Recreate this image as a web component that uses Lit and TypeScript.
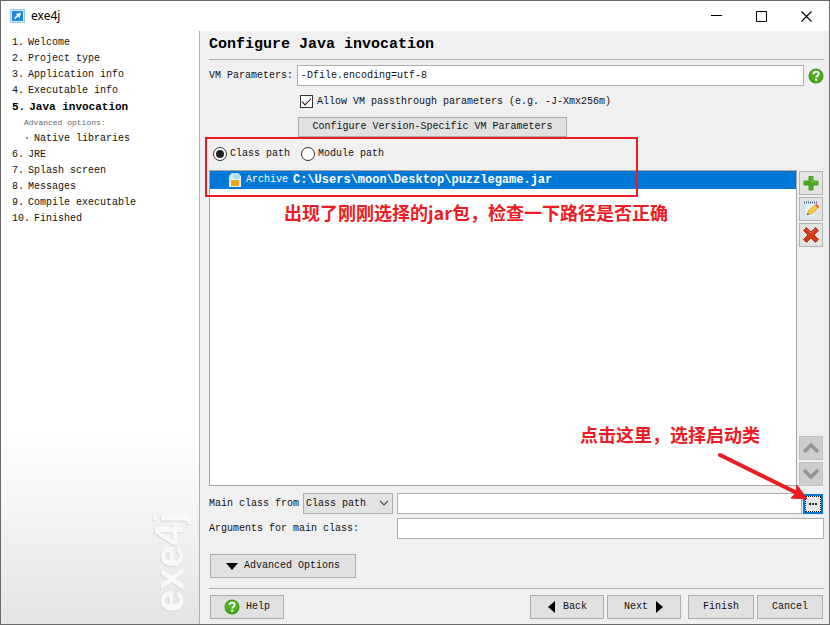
import { LitElement, html, svg, css, nothing } from "lit";
import { customElement, property } from "lit/decorators.js";

interface Step {
  num?: string;
  label: string;
  kind?: "current" | "note" | "sub";
}

const STEPS: Step[] = [
  { num: "1.", label: "Welcome" },
  { num: "2.", label: "Project type" },
  { num: "3.", label: "Application info" },
  { num: "4.", label: "Executable info" },
  { num: "5.", label: "Java invocation", kind: "current" },
  { label: "Advanced options:", kind: "note" },
  { num: "·", label: "Native libraries", kind: "sub" },
  { num: "6.", label: "JRE" },
  { num: "7.", label: "Splash screen" },
  { num: "8.", label: "Messages" },
  { num: "9.", label: "Compile executable" },
  { num: "10.", label: "Finished" },
];

const helpIcon = html`<svg class="help-icon" width="16" height="16" viewBox="0 0 16 16" aria-hidden="true">
  <circle cx="8" cy="8" r="7.5" fill="#3f9a14" />
  <circle cx="8" cy="7.6" r="6.3" fill="#52ad22" />
  <path d="M5.5 6.1C5.6 4.5 6.6 3.7 8.1 3.7s2.6.8 2.6 2.2c0 1.9-2.5 1.9-2.5 3.7" fill="none" stroke="#fff" stroke-width="1.8" />
  <rect x="7.2" y="10.7" width="2" height="2" fill="#fff" />
</svg>`;

const TOOL_ICONS = {
  add: svg`<path d="M7 2.500h4v4.500h5v4h-5v5H7v-5H2V7h5z" fill="#4aa81c" stroke="#4a9b26" stroke-width="1" />
    <path d="M8 3.500h2v4.500h5" fill="none" stroke="#76c44b" stroke-width="1" />`,
  edit: svg`<rect x="2.500" y="3" width="11" height="14" fill="#e4f4fd" stroke="#c3dfee" />
    <path d="M2 2.500h13" stroke="#4f6a86" stroke-width="2" stroke-dasharray="1 1" />
    <path d="M5 15l1.500-4.500L13 5l3 3-6.500 6z" fill="#fac83a" stroke="#dda02a" stroke-width=".7" />
    <path d="M13 5l1.500-1.300 3 3L16 8z" fill="#e9642c" />
    <path d="M5 15l.7-2.200L7.300 14.300z" fill="#4d4d4d" />`,
  remove: svg`<path d="M4.500 1.500L9 6l4.500-4.500 3 3L12 9l4.500 4.500-3 3L9 12l-4.500 4.500-3-3L6 9 1.500 4.500z" fill="#cf3a12" stroke="#b03a1c" stroke-width="1" stroke-linejoin="round" />
    <path d="M4.500 3L9 7.500 13.500 3" fill="none" stroke="#e8694a" stroke-width="1" />`,
  up: svg`<path d="M2 13l7-7 7 7" fill="none" stroke="#949494" stroke-width="3.500" />`,
  down: svg`<path d="M2 5l7 7 7-7" fill="none" stroke="#949494" stroke-width="3.500" />`,
};

@customElement("tool-button")
class ToolButton extends LitElement {
  @property() icon: keyof typeof TOOL_ICONS = "add";
  @property() label = "";
  @property({ type: Boolean }) disabled = false;

  static styles = css`
    :host { display: block; }
    .btn {
      display: flex; align-items: center; justify-content: center;
      width: 24px; height: 24px; padding: 0;
      background: #e3e3e3; border: 1px solid #b2b2b2;
    }
    .btn:disabled { background: #cdcdcd; border-color: #c2c2c2; }
  `;

  render() {
    return html`<button class="btn" aria-label=${this.label} ?disabled=${this.disabled}>
      <svg width="18" height="18" viewBox="0 0 18 18" aria-hidden="true">${TOOL_ICONS[this.icon]}</svg>
    </button>`;
  }
}

@customElement("wizard-steps")
class WizardSteps extends LitElement {
  static styles = css`
    :host {
      display: flex; flex-direction: column; justify-content: space-between;
      box-sizing: border-box; padding: 4px 10px 12px 11px;
      background: linear-gradient(#fff 0, #fff 68%, #e4e4e4 100%);
      border-right: 1px solid #b0b0b0;
    }
    .list { list-style: none; margin: 0; padding: 0; }
    .step { display: flex; gap: 4px; height: 16px; line-height: 16px; white-space: pre; }
    .current { font-size: 11px; font-weight: bold; color: #000; }
    .note { padding-left: 12px; font-size: 8px; color: #666; }
    .sub { padding-left: 12px; }
    .brand {
      align-self: flex-end; writing-mode: vertical-rl; transform: rotate(180deg);
      font: bold 40px/40px "Liberation Sans", Arial, sans-serif;
      color: #f9f9f9; text-shadow: -1px -1px 1px #dadada;
    }
  `;

  render() {
    return html`
      <ol class="list">
        ${STEPS.map(
          (s) => html`<li class="step ${s.kind ?? ""}">
            ${s.num ? html`<span>${s.num}</span>` : nothing}<span>${s.label}</span>
          </li>`
        )}
      </ol>
      <div class="brand">exe4j</div>
    `;
  }
}

@customElement("app-root")
class AppRoot extends LitElement {
  static styles = css`
    :host {
      display: flex; flex-direction: column; box-sizing: border-box; min-height: 100vh;
      border: 1px solid #6a6a6a; background: #f0f0f0; color: #111;
      font: 10px/16px "Liberation Mono", "Noto Sans CJK SC", monospace;
    }
    * { box-sizing: border-box; }
    button, input, select { font: inherit; color: inherit; margin: 0; border-radius: 0; }

    .titlebar { display: flex; align-items: center; height: 30px; padding-left: 9px; background: #fff; }
    .title { flex: 1; margin: 0 0 0 6px; font: 12px/16px "Noto Sans", sans-serif; color: #000; }
    .win { width: 45px; height: 30px; padding: 0; border: 0; background: none; display: flex; align-items: center; justify-content: center; }

    .body { flex: 1; display: grid; grid-template-columns: 199px minmax(0, 1fr); }
    .main { display: flex; flex-direction: column; min-width: 0; padding: 4px 5px 5px 9px; }

    .heading { margin: 0; height: 24px; font-size: 15px; line-height: 20px; font-weight: bold; color: #000; }
    .rule { height: 1px; margin: 0; border: 0; background: #adadad; flex: none; }

    .field { height: 21px; min-width: 0; flex: 1; padding: 0 3px; background: #fff; border: 1px solid #adadad; outline: 0; }
    .row { display: flex; align-items: center; }
    .form { display: grid; grid-template-columns: 84px minmax(0, 1fr); column-gap: 4px; margin-top: 5px; }
    .vm { gap: 4px; }
    .help-link { display: flex; width: 16px; height: 16px; padding: 0; border: 0; background: none; }
    .checkline { grid-column: 2; height: 31px; padding-left: 3px; gap: 4px; display: flex; align-items: center; }
    .check {
      appearance: none; width: 13px; height: 13px; background: #fff; border: 1px solid #333;
      display: grid; place-items: center;
    }
    .check:checked::after {
      content: ""; width: 8px; height: 4px; margin-top: -2px;
      border-left: 1px solid #111; border-bottom: 1px solid #111; transform: rotate(-45deg);
    }
    .push {
      display: flex; align-items: center; justify-content: center; gap: 6px; height: 24px;
      padding: 0; background: #e1e1e1; border: 1px solid #adadad; white-space: nowrap;
    }
    .version { grid-column: 2; justify-self: start; width: 269px; height: 20px; margin-left: 1px; }

    .paths { position: relative; flex: 1; display: flex; flex-direction: column; }
    .radios { display: flex; align-items: center; gap: 11px; height: 33px; padding-left: 4px; }
    .option { display: flex; align-items: center; gap: 3px; }
    .radio {
      appearance: none; width: 14px; height: 14px; border: 1px solid #333; border-radius: 50%;
      background: #fff; display: grid; place-items: center;
    }
    .radio:checked::after { content: ""; width: 8px; height: 8px; border-radius: 50%; background: #222; }
    .listrow { flex: 1; display: flex; gap: 2px; }
    .list { flex: 1; min-width: 0; margin: 0; padding: 0; list-style: none; background: #fff; border: 1px solid #a5a5a5; }
    .item {
      display: flex; align-items: center; height: 18px; padding-left: 18px;
      background: #0078d7; color: #fff; white-space: nowrap;
    }
    .kind { margin: 0 5px 0 4px; }
    .path { font-size: 12px; font-weight: bold; }
    .tools { display: flex; flex-direction: column; gap: 2px; padding: 1px 1px 0 0; }
    .spacer { flex: 1; }

    .mainclass { margin-top: 7px; }
    .class-label { width: 94px; }
    .select-wrap { position: relative; display: flex; width: 90px; margin-right: 4px; }
    .select { appearance: none; width: 100%; height: 21px; padding: 0 2px; background: #e3e3e3; border: 1px solid #adadad; }
    .chevron { position: absolute; right: 4px; top: 7px; pointer-events: none; }
    .browse {
      display: flex; align-items: center; justify-content: center; width: 20px; height: 20px;
      margin: 0 1px; padding: 0; background: #e9e9e9; border: 2px solid #0078d7;
      outline: 1px dotted #111; outline-offset: -3px;
    }
    .args { margin-top: 4px; }
    .args-label { width: 188px; }
    .advanced { width: 146px; margin: 15px 0 10px 1px; }
    .footer { display: flex; gap: 3px; padding: 6px 1px 0 1px; }
    .w75 { width: 74px; }
    .w67 { width: 66px; }
    .gap { margin-left: 4px; }

    .mark { position: absolute; pointer-events: none; }
    .frame { left: -4px; top: 0; width: 433px; height: 60px; border: 2px solid #ed1c24; }
    .say { font: bold 18px/24px "Noto Sans CJK SC", sans-serif; color: #ed1c24; white-space: nowrap; }
    .say-path { left: 75px; top: 63px; }
    .say-click { right: 64px; bottom: 40px; }
    .arrow { right: 13px; bottom: -18px; }
  `;

  render() {
    return html`
      <header class="titlebar">
        <svg width="15" height="14" viewBox="0 0 15 14" aria-hidden="true">
          <rect x=".5" y=".5" width="14" height="13" fill="#d9ecfb" stroke="#9cc6ea" />
          <rect x="2" y="2" width="11" height="10" fill="#1e88e0" />
          <path d="M11 3.500L6 5l1 1.200L4 9l1 1 3-2.500L9.500 9z" fill="#fff" />
        </svg>
        <h1 class="title">exe4j</h1>
        <button class="win" aria-label="Minimize">
          <svg width="11" height="11" viewBox="0 0 11 11"><path d="M0 4.500h11" stroke="#000" /></svg>
        </button>
        <button class="win" aria-label="Maximize">
          <svg width="11" height="11" viewBox="0 0 11 11"><path d="M.5.5h10v10H.5z" fill="none" stroke="#000" /></svg>
        </button>
        <button class="win" aria-label="Close">
          <svg width="11" height="11" viewBox="0 0 11 11"><path d="M.5.5l10 10M10.500.5l-10 10" stroke="#000" stroke-width="1.100" /></svg>
        </button>
      </header>

      <div class="body">
        <wizard-steps></wizard-steps>
        <main class="main">
          <h2 class="heading">Configure Java invocation</h2>
          <hr class="rule" />

          <div class="form">
            <label class="row" for="vm">VM Parameters:</label>
            <div class="row vm">
              <input id="vm" class="field" type="text" value="-Dfile.encoding=utf-8" />
              <button class="help-link" aria-label="Help on VM parameters">${helpIcon}</button>
            </div>
            <label class="checkline">
              <input class="check" type="checkbox" checked />
              Allow VM passthrough parameters (e.g. -J-Xmx256m)
            </label>
            <button class="push version">Configure Version-Specific VM Parameters</button>
          </div>

          <section class="paths">
            <div class="radios">
              <label class="option"><input class="radio" type="radio" name="kind" checked />Class path</label>
              <label class="option"><input class="radio" type="radio" name="kind" />Module path</label>
            </div>
            <div class="listrow">
              <ul class="list">
                <li class="item">
                  <svg width="14" height="16" viewBox="0 0 14 16" aria-hidden="true">
                    <path d="M4 1h6l3 3v11H1V4z" fill="#e2f0f5" />
                    <path d="M4 1h6l2 3v3H2V4z" fill="#b5dfe6" />
                    <path d="M4 2v5" stroke="#fff" stroke-width="1" />
                    <rect x="3" y="8" width="8" height="6" fill="#f5a31b" />
                  </svg>
                  <span class="kind">Archive</span>
                  <span class="path">C:\\Users\\moon\\Desktop\\puzzlegame.jar</span>
                </li>
              </ul>
              <div class="tools">
                <tool-button icon="add" label="Add"></tool-button>
                <tool-button icon="edit" label="Edit"></tool-button>
                <tool-button icon="remove" label="Remove"></tool-button>
                <div class="spacer"></div>
                <tool-button icon="up" label="Move up" disabled></tool-button>
                <tool-button icon="down" label="Move down" disabled></tool-button>
              </div>
            </div>
            <div class="mark frame"></div>
            <div class="mark say say-path">出现了刚刚选择的jar包，检查一下路径是否正确</div>
            <div class="mark say say-click">点击这里，选择启动类</div>
            <svg class="mark arrow" width="96" height="54" viewBox="0 0 96 54" aria-hidden="true">
              <path d="M5 5L82 43" stroke="#ed1c24" stroke-width="4" stroke-linecap="round" />
              <path d="M92 49L76 48l5-5 1-8z" fill="#ed1c24" stroke="#ed1c24" stroke-linejoin="round" />
            </svg>
          </section>

          <div class="row mainclass">
            <label class="class-label" for="from">Main class from</label>
            <div class="select-wrap">
              <select id="from" class="select"><option>Class path</option></select>
              <svg class="chevron" width="10" height="7" viewBox="0 0 10 7" aria-hidden="true">
                <path d="M1 1l4 4 4-4" fill="none" stroke="#444" stroke-width="1.100" />
              </svg>
            </div>
            <input class="field" type="text" aria-label="Main class" />
            <button class="browse" aria-label="Choose main class">
              <svg width="10" height="2" viewBox="0 0 10 2"><path d="M1 0h2v2H1zM4 0h2v2H4zM7 0h2v2H7z" fill="#222" /></svg>
            </button>
          </div>
          <div class="row args">
            <label class="args-label" for="args">Arguments for main class:</label>
            <input id="args" class="field" type="text" />
          </div>
          <button class="push advanced">
            <svg width="12" height="7" viewBox="0 0 12 7" aria-hidden="true"><path d="M0 0h12L6 7z" /></svg>
            Advanced Options
          </button>
          <hr class="rule" />
          <footer class="footer">
            <button class="push w75">${helpIcon}Help</button>
            <div class="spacer"></div>
            <button class="push w75">
              <svg width="10" height="12" viewBox="0 0 10 12" aria-hidden="true"><path d="M8 0v12L1 6z" /></svg>
              Back
            </button>
            <button class="push w75">
              Next
              <svg width="10" height="12" viewBox="0 0 10 12" aria-hidden="true"><path d="M2 0v12l7-6z" /></svg>
            </button>
            <button class="push w67 gap">Finish</button>
            <button class="push w67">Cancel</button>
          </footer>
        </main>
      </div>
    `;
  }
}
